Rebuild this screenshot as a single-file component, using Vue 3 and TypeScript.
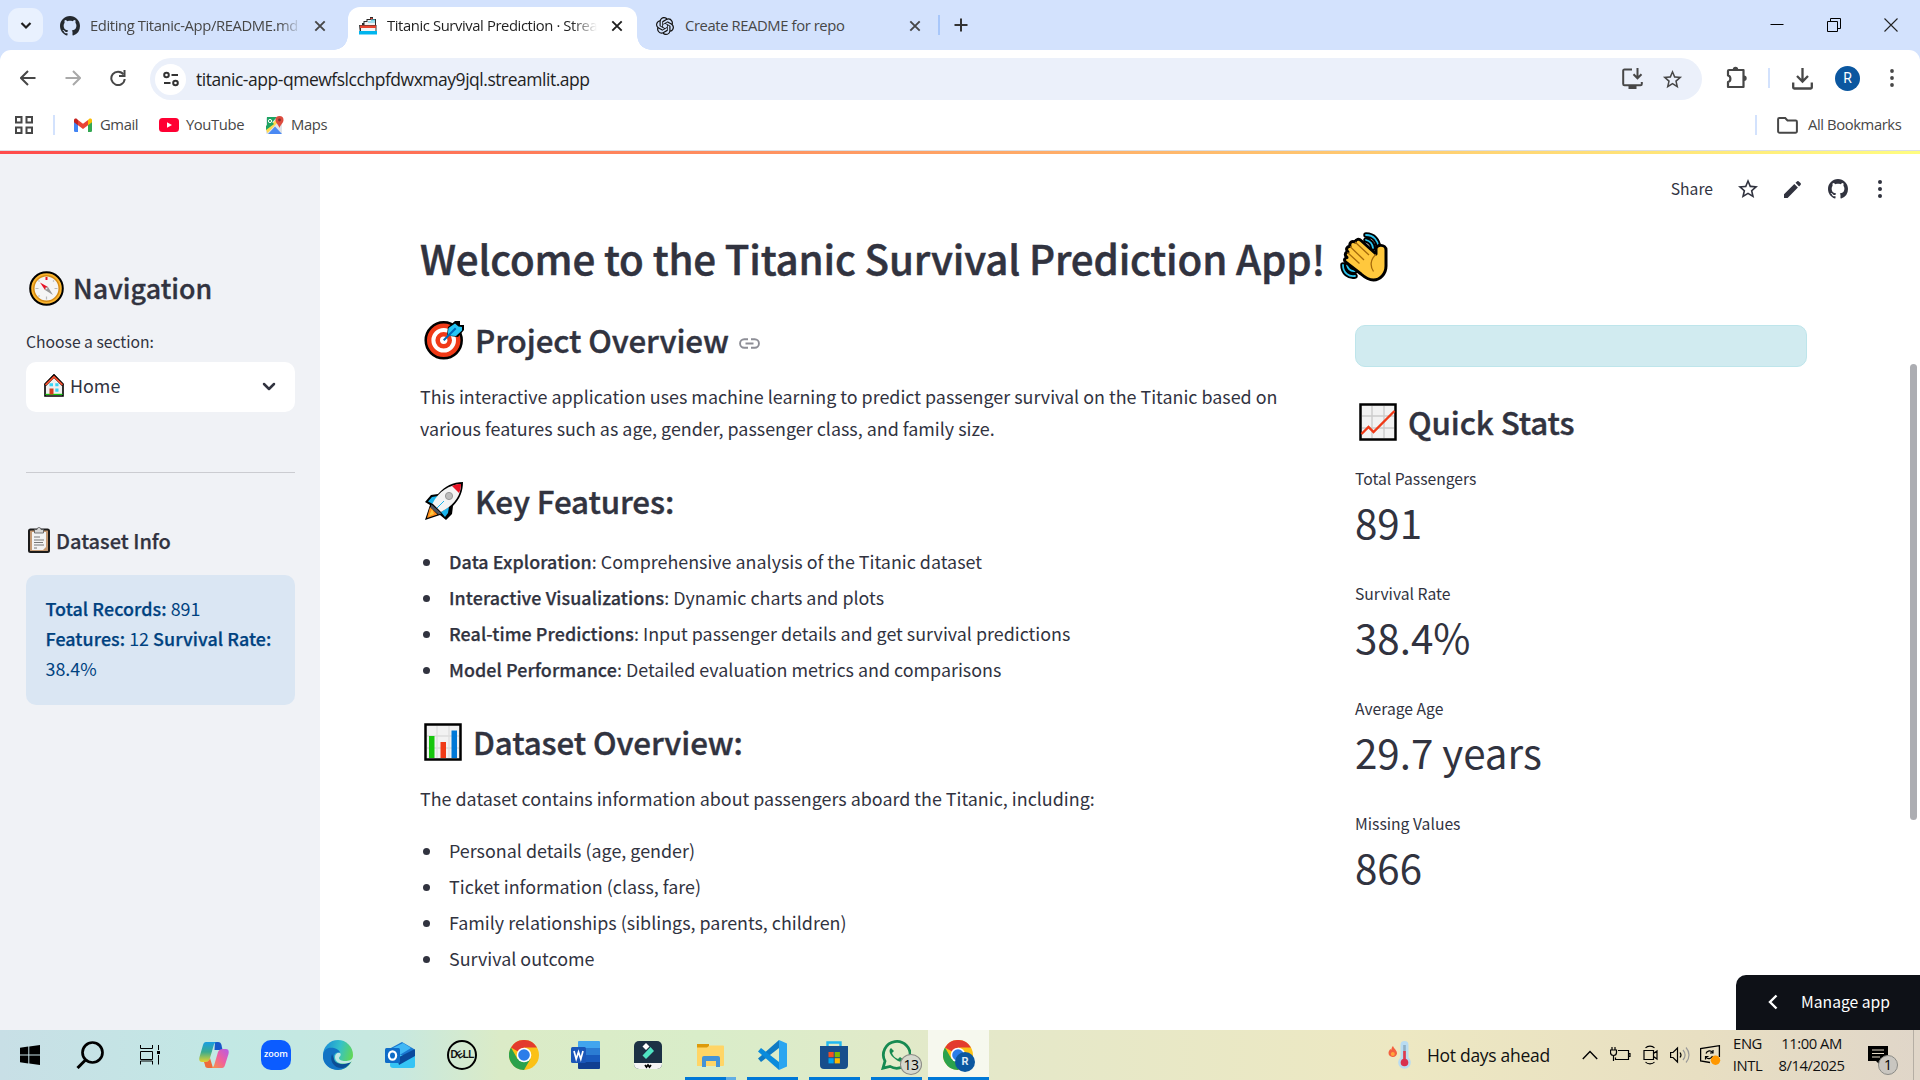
<script setup lang="ts">
interface Feature {
  name: string
  text: string
}

interface Metric {
  label: string
  value: string
}

const features: Feature[] = [
  { name: 'Data Exploration', text: 'Comprehensive analysis of the Titanic dataset' },
  { name: 'Interactive Visualizations', text: 'Dynamic charts and plots' },
  { name: 'Real-time Predictions', text: 'Input passenger details and get survival predictions' },
  { name: 'Model Performance', text: 'Detailed evaluation metrics and comparisons' },
]

const datasetItems: string[] = [
  'Personal details (age, gender)',
  'Ticket information (class, fare)',
  'Family relationships (siblings, parents, children)',
  'Survival outcome',
]

const metrics: Metric[] = [
  { label: 'Total Passengers', value: '891' },
  { label: 'Survival Rate', value: '38.4%' },
  { label: 'Average Age', value: '29.7 years' },
  { label: 'Missing Values', value: '866' },
]

const githubPath =
  'M8 0C3.58 0 0 3.58 0 8c0 3.54 2.29 6.53 5.47 7.59.4.07.55-.17.55-.38 0-.19-.01-.82-.01-1.49-2.01.37-2.53-.49-2.69-.94-.09-.23-.48-.94-.82-1.13-.28-.15-.68-.52-.01-.53.63-.01 1.08.58 1.23.82.72 1.21 1.87.87 2.33.66.07-.52.28-.87.51-1.07-1.78-.2-3.64-.89-3.64-3.95 0-.87.31-1.59.82-2.15-.08-.2-.36-1.02.08-2.12 0 0 .67-.21 2.2.82.64-.18 1.32-.27 2-.27s1.36.09 2 .27c1.53-1.04 2.2-.82 2.2-.82.44 1.1.16 1.92.08 2.12.51.56.82 1.27.82 2.15 0 3.07-1.87 3.75-3.65 3.95.29.25.54.73.54 1.48 0 1.07-.01 1.93-.01 2.2 0 .21.15.46.55.38A8.01 8.01 0 0 0 16 8c0-4.42-3.58-8-8-8z'
const starPath =
  'M22 9.24l-7.19-.62L12 2 9.19 8.63 2 9.24l5.46 4.73L5.82 21 12 17.27 18.18 21l-1.63-7.03L22 9.24zM12 15.4l-3.76 2.27 1-4.28-3.32-2.88 4.38-.38L12 6.1l1.71 4.04 4.38.38-3.32 2.88 1 4.28L12 15.4z'
</script>

<template>
  <div class="screen">
    <header class="tabstrip">
      <div class="tab-search">
        <svg width="14" height="14" viewBox="0 0 14 14"><path d="M2.5 5 7 9.5 11.500 5" fill="none" stroke="#1f1f1f" stroke-width="2.200" /></svg>
      </div>
      <div class="tab tab-first">
        <svg class="fav" width="20" height="20" viewBox="0 0 16 16"><path :d="githubPath" fill="#24292f" /></svg>
        <span class="tab-title t1">Editing Titanic-App/README.md</span>
        <svg class="x" width="12" height="12" viewBox="0 0 12 12"><path d="M1.300 1.300 10.700 10.700M10.700 1.300 1.300 10.700" stroke="#474747" stroke-width="1.900" /></svg>
      </div>
      <div class="tab tab-active">
        <svg class="fav" width="18" height="18" viewBox="0 0 18 18">
          <path d="M4.500 4h3V2H11V0h3v2h3v7H3V6h1.500z" fill="#2a2a2a" /><path d="M5.500 5h3V3H16v5.500H5.500z" fill="#f1f1f1" /><path d="M11.500 1h2v1.500h-2z" fill="#e8432e" /><path d="M9 5h7M12 3.200h4" stroke="#4acbe8" stroke-width="1.200" /><path d="M0 8h17.500v9H1z" fill="#333" /><path d="M1 8.500h16V11H1z" fill="#e8432e" /><path d="M2 11h14.500v3H2z" fill="#f4f4f4" /><path d="M0 14h18v3.500H0z" fill="#00b5ee" />
        </svg>
        <span class="tab-title t2">Titanic Survival Prediction · Streamlit</span>
        <svg class="x" width="12" height="12" viewBox="0 0 12 12"><path d="M1.300 1.300 10.700 10.700M10.700 1.300 1.300 10.700" stroke="#1f1f1f" stroke-width="1.900" /></svg>
      </div>
      <div class="tab tab-last">
        <svg class="fav" width="18" height="18" viewBox="0 0 24 24"><path fill="#111" d="M22.282 9.821a5.985 5.985 0 0 0-.516-4.910 6.046 6.046 0 0 0-6.510-2.900A6.065 6.065 0 0 0 4.981 4.180a5.985 5.985 0 0 0-3.998 2.900 6.046 6.046 0 0 0 .743 7.097 5.980 5.980 0 0 0 .510 4.911 6.051 6.051 0 0 0 6.515 2.900A5.985 5.985 0 0 0 13.260 24a6.056 6.056 0 0 0 5.772-4.206 5.990 5.990 0 0 0 3.998-2.900 6.056 6.056 0 0 0-.748-7.073zM13.260 22.430a4.476 4.476 0 0 1-2.877-1.040l.142-.081 4.779-2.758a.795.795 0 0 0 .393-.681v-6.737l2.020 1.169a.071.071 0 0 1 .038.052v5.583a4.504 4.504 0 0 1-4.495 4.493zM3.600 18.304a4.471 4.471 0 0 1-.535-3.014l.142.085 4.783 2.759a.771.771 0 0 0 .781 0l5.843-3.369v2.332a.080.080 0 0 1-.033.062L9.740 19.950a4.500 4.500 0 0 1-6.141-1.646zM2.341 7.896a4.485 4.485 0 0 1 2.366-1.973V11.600a.766.766 0 0 0 .388.677l5.815 3.354-2.020 1.169a.076.076 0 0 1-.071 0l-4.830-2.787A4.504 4.504 0 0 1 2.341 7.872zm16.597 3.855-5.833-3.387L15.119 7.200a.076.076 0 0 1 .071 0l4.830 2.791a4.494 4.494 0 0 1-.677 8.105v-5.678a.790.790 0 0 0-.405-.667zm2.010-3.023-.141-.085-4.774-2.782a.776.776 0 0 0-.785 0L9.409 9.230V6.897a.066.066 0 0 1 .028-.062l4.830-2.787a4.499 4.499 0 0 1 6.681 4.660zM8.307 12.863l-2.020-1.164a.080.080 0 0 1-.038-.057V6.075a4.499 4.499 0 0 1 7.376-3.454l-.142.081-4.779 2.758a.795.795 0 0 0-.393.681zm1.097-2.365 2.602-1.500 2.607 1.500v2.999l-2.597 1.500-2.607-1.500z" /></svg>
        <span class="tab-title t3">Create README for repo</span>
        <svg class="x" width="12" height="12" viewBox="0 0 12 12"><path d="M1.300 1.300 10.700 10.700M10.700 1.300 1.300 10.700" stroke="#474747" stroke-width="1.900" /></svg>
      </div>
      <i class="strip-sep"></i>
      <svg class="plus" width="14" height="14" viewBox="0 0 14 14"><path d="M7 .5v13M.5 7h13" stroke="#333" stroke-width="2" /></svg>
      <div class="window-controls">
        <svg width="14" height="14" viewBox="0 0 14 14"><path d="M.5 6.500h13" stroke="#000" /></svg>
        <svg width="14" height="14" viewBox="0 0 14 14"><path d="M.5 3.500h10v10H.5zM3.500 3.500v-3h10v10h-3" fill="none" stroke="#000" /></svg>
        <svg width="14" height="14" viewBox="0 0 14 14"><path d="M.5.500l13 13M13.500.500l-13 13" stroke="#222" stroke-width="1.100" /></svg>
      </div>
    </header>

    <div class="toolbar-back">
      <div class="toolbar">
        <svg class="nav-icon back" width="16" height="16" viewBox="0 0 16 16"><path d="M15.500 8H1.500M8 1 1 8l7 7" fill="none" stroke="#474747" stroke-width="2" /></svg>
        <svg class="nav-icon fwd" width="16" height="16" viewBox="0 0 16 16"><path d="M.5 8h14M8 1l7 7-7 7" fill="none" stroke="#a9a9a9" stroke-width="2" /></svg>
        <svg class="nav-icon reload" width="16" height="16" viewBox="0 0 16 16"><path d="M13.500 4.500A6.700 6.700 0 1 0 14.700 9" fill="none" stroke="#474747" stroke-width="2" /><path d="M15.500 0v7H9V5h4.500V0z" fill="#474747" /></svg>
        <div class="omnibox">
          <div class="site-info">
            <svg width="16" height="16" viewBox="0 0 16 16"><g fill="none" stroke="#333" stroke-width="2"><circle cx="3.500" cy="4" r="2.300" /><path d="M8.500 4H15M1 12h6.500" /><circle cx="12.500" cy="12" r="2.300" /></g></svg>
          </div>
          <span class="url">titanic-app-qmewfslcchpfdwxmay9jql.streamlit.app</span>
          <svg class="install" width="21" height="22" viewBox="0 0 21 22"><path d="M10 1.500H2.500A1.300 1.300 0 0 0 1.200 3v13a1.300 1.300 0 0 0 1.300 1.300h16A1.300 1.300 0 0 0 19.800 16v-2" fill="none" stroke="#474747" stroke-width="2" /><path d="M6.500 17.500h8V21h-8z" fill="#474747" /><path d="M15.500 0v10M11.500 6.300l4 4 4-4" fill="none" stroke="#474747" stroke-width="2" /></svg>
          <svg class="star" width="23" height="23" viewBox="0 0 24 24"><path :d="starPath" fill="#474747" /></svg>
        </div>
        <svg class="puzzle" width="22" height="25" viewBox="0 0 22 25"><path d="M3 5h14.500v7.500V22H2v-5c3.200-.5 3.200-6 0-6.500V6a1 1 0 0 1 1-1z" fill="none" stroke="#474747" stroke-width="2.200" stroke-linejoin="round" /><path d="M6.800 4.500a2.700 2.700 0 0 1 5.400 0zM18 10.500a2.700 2.700 0 0 1 0 5.400z" fill="#474747" /></svg>
        <i class="tool-sep"></i>
        <svg class="download" width="21" height="22" viewBox="0 0 21 22"><path d="M10.500 0v13M5 8l5.500 5.500L16 8M1.200 14.500v5a1 1 0 0 0 1 1h16.600a1 1 0 0 0 1-1v-5" fill="none" stroke="#474747" stroke-width="2.300" /></svg>
        <div class="avatar">R</div>
        <svg class="dots" width="4" height="18" viewBox="0 0 4 18"><g fill="#474747"><circle cx="2" cy="2" r="1.900" /><circle cx="2" cy="9" r="1.900" /><circle cx="2" cy="16" r="1.900" /></g></svg>
      </div>
      <div class="bookmarks">
        <svg class="apps" width="18" height="18" viewBox="0 0 18 18"><path d="M1 1h5.500v5.500H1zM11.500 1H17v5.500h-5.500zM1 11.500h5.500V17H1zM11.500 11.500H17V17h-5.500z" fill="none" stroke="#474747" stroke-width="2" /></svg>
        <i class="bm-sep"></i>
        <svg class="gmail" width="18" height="14" viewBox="0 0 18 14"><path d="M0 2v10.700A1.300 1.300 0 0 0 1.300 14H4V4.500z" fill="#4285f4" /><path d="M14 4.500V14h2.700a1.300 1.300 0 0 0 1.300-1.300V2z" fill="#34a853" /><path d="M4 2v5.300l5 3.700 5-3.700V2L9 5.700z" fill="#ea4335" /><path d="M0 2v2.200l4 3.100V2L3 1C1.500 0 0 1 0 2z" fill="#c5221f" /><path d="M18 2v2.200l-4 3.100V2l1-1c1.500-1 3 0 3 1z" fill="#fbbc04" /></svg>
        <span class="bm b1">Gmail</span>
        <svg class="youtube" width="20" height="14" viewBox="0 0 20 14"><rect width="20" height="14" rx="3.500" fill="#ff0033" /><path d="M8 4.200v5.600L13 7z" fill="#fff" /></svg>
        <span class="bm b2">YouTube</span>
        <svg class="maps" width="18" height="18" viewBox="0 0 18 18"><rect y="1" width="16" height="17" rx="1.500" fill="#dfe3e8" /><path d="M1 1h10L1 12z" fill="#1ea362" /><path d="M0 13.500 12 2l2 2L1.500 17z" fill="#ffd94c" /><path d="M0 14v-4l5-5 3 3z" fill="#1ea362" /><path d="M2 18 9 10.500l7 7.500z" fill="#4a89f3" /><path d="M13.500 0a4 4 0 0 0-4 4c0 3 3 4.500 4 8 1-3.500 4-5 4-8a4 4 0 0 0-4-4z" fill="#dd4b3e" /><circle cx="13.500" cy="4" r="1.400" fill="#822f2b" /><circle cx="4" cy="5" r="1.600" fill="none" stroke="#fff" /></svg>
        <span class="bm b3">Maps</span>
        <div class="all-bookmarks">
          <i class="bm-sep"></i>
          <svg width="21" height="17" viewBox="0 0 21 17"><path d="M2.300 1.100h5.900l2.300 2.400h8.200a1.200 1.200 0 0 1 1.200 1.200v9.500a1.500 1.500 0 0 1-1.500 1.500H2.600a1.500 1.500 0 0 1-1.500-1.500V2.300a1.200 1.200 0 0 1 1.200-1.200z" fill="none" stroke="#474747" stroke-width="2" /></svg>
          <span class="bm b4">All Bookmarks</span>
        </div>
      </div>
    </div>
    <div class="rainbow"></div>

    <div class="app">
      <aside class="sidebar">
        <h2 class="side-title">
          <svg width="35" height="35" viewBox="0 0 35 35"><circle cx="17.500" cy="17.500" r="16.300" fill="#fbb52f" stroke="#000" stroke-width="2" /><circle cx="17.500" cy="17.500" r="12.700" fill="#f5f5f5" stroke="#d58b14" stroke-width="1.500" /><g stroke="#bbb" stroke-width="1.200"><path d="M6.500 17.500h3M25.500 17.500h3M17.500 25.500v3M9.500 9.500l1 1M25 9.500l-1 1M9.500 25.500l1-1" /></g><path d="M16.500 6h2v3h-2z" fill="#e81224" /><path d="M11 11.500 19 16l-3 3z" fill="#e81224" /><path d="m24 24-8-5 3-3z" fill="#999" /><circle cx="17.500" cy="17.500" r="1.200" fill="#eee" stroke="#777" stroke-width=".5" /></svg>
          <span>Navigation</span>
        </h2>
        <label class="side-label">Choose a section:</label>
        <div class="select">
          <svg width="20" height="23" viewBox="0 0 20 23"><path d="M1 10.500 10 1.200l9 9.300V22H1z" fill="#f0f0f0" stroke="#000" stroke-width="1.600" /><path d="M1 11 10 2l9 9" fill="none" stroke="#000" stroke-width="3" /><path d="M1.500 10.800 10 2.800l8.500 8" fill="none" stroke="#f4502f" stroke-width="1.800" /><path d="M1.500 19.800h17V21h-17z" fill="#16c60c" /><path d="M5.500 14.500h4v6h-4z" fill="#d83b1c" /><path d="M5.500 9.300H9v3H5.500zM11.300 9.300h3.200v3h-3.200zM11.300 14.500h3.200v3.200h-3.200z" fill="#3ad4f5" /></svg>
          <span>Home</span>
          <svg class="chev" width="14" height="10" viewBox="0 0 14 10"><path d="m2 2 5 5 5-5" fill="none" stroke="#31333f" stroke-width="2.500" stroke-linecap="round" stroke-linejoin="round" /></svg>
        </div>
        <hr />
        <h3 class="side-sub">
          <svg width="22" height="26" viewBox="0 0 22 26"><rect x="1" y="2.500" width="20" height="22.500" rx="1.500" fill="#c49a74" stroke="#1b1b1b" stroke-width="2" /><path d="M4 5h14v15l-3 3H4z" fill="#f3f3f3" /><path d="M6.500 2.500H9a2 2 0 0 1 4 0h2.500V6h-9z" fill="#d8d8d8" stroke="#555" stroke-width=".8" /><path d="M6 10h6M6 13h10M6 15.500h9M6 18h10M6 21h3" stroke="#777" /></svg>
          <span>Dataset Info</span>
        </h3>
        <div class="info"><b>Total Records:</b> 891<br /><b>Features:</b> 12 <b>Survival Rate:</b><br />38.4%</div>
      </aside>

      <main class="content">
        <h1>
          <span>Welcome to the Titanic Survival Prediction App!</span>
          <svg width="50" height="52" viewBox="0 0 50 52">
            <g fill="none" stroke-linecap="round"><path d="M27 4c8 0 12 6 12.500 12M27 9c4 1 6.500 4 7 8M4 34c0 8 6 12 12 11M8 34c1 4 4 6.500 8 6" stroke="#000" stroke-width="5.500" /><path d="M27 4c8 0 12 6 12.500 12M27 9c4 1 6.500 4 7 8M4 34c0 8 6 12 12 11M8 34c1 4 4 6.500 8 6" stroke="#2cc5f0" stroke-width="1.800" /></g>
            <path d="M22 43 6.500 31c-2-2-.5-4.500 1.500-4.500-3-2.500-1.500-5.500 1-5.500-3-3-.5-6 2-5.500-1-4 2-6 5-4.500 1-3 4-3.500 6-1.500L37 23V18c0-5 10-5 10 1v16c0 8-6 14-12.500 14-5 0-8-2-12.500-6z" fill="#ffc83d" stroke="#000" stroke-width="3" stroke-linejoin="round" />
            <path d="m16 11 14 13M11 15.500l14 13.500M8.500 21.500l12 11M37 23.500c-6 5-6 12-2.500 17" fill="none" stroke="#a5690b" stroke-width="1.300" />
          </svg>
        </h1>
        <div class="columns">
          <section class="left">
            <h2 class="head h-overview">
              <svg width="40" height="40" viewBox="0 0 40 40"><circle cx="19.700" cy="20.300" r="18" fill="#f03a17" stroke="#000" stroke-width="2.500" /><circle cx="19.700" cy="20.300" r="10.300" fill="none" stroke="#fff" stroke-width="4" /><circle cx="19.700" cy="20.300" r="3.700" fill="#fff" /><path d="m23 15 1-8 7-6h5v4h4v5l-6 7-8-1z" fill="#000" /><path d="m23.500 15.500 1-7.500 6.500-4.500 3.500 3L38 7v3.500L32 16z" fill="#26c6f5" /><path d="m19.700 20.300 12-12" stroke="#0067b8" stroke-width="2" /></svg>
              <span>Project Overview</span>
              <svg class="link" width="21" height="11" viewBox="0 0 21 11"><path d="M9 1.200H5.300a4.200 4.200 0 0 0 0 8.500H9M12 1.200h3.700a4.200 4.200 0 0 1 0 8.500H12M6.500 5.500h8" fill="none" stroke="#8d8e96" stroke-width="1.900" /></svg>
            </h2>
            <p class="intro">This interactive application uses machine learning to predict passenger survival on the Titanic based on<br />various features such as age, gender, passenger class, and family size.</p>
            <h2 class="head h-features">
              <svg width="40" height="40" viewBox="0 0 40 40"><path d="M14 13 7 14l-6 7 5 3-5 15 15-5 6 5 6-6 1-8C36 18 39 10 39 1 29 1 21 5 14 13z" fill="#000" /><path d="m14 15-6 1-4 4.500 5 2.500zM25 26l-1 6-3 4-4-5z" fill="#1ab4ec" /><path d="M8.500 22.500C15 10 25 4 37 3c0 12-7 21-20 28z" fill="#f4f4f4" /><path d="M28 5c3-1.500 6-2 9-2 0 3-.5 6-2 9z" fill="#e81224" /><circle cx="25" cy="15" r="3.600" fill="#bdbdbd" stroke="#999" /><path d="m7.500 23.500 10 9-3 1-8-7z" fill="#4b5563" /><path d="m6 26 7.500 7.500L3 37z" fill="#ff8c1a" /><path d="m8 28 2 5-5 2z" fill="#ffc83d" /><path d="m13 27 7-7" stroke="#1ab4ec" /></svg>
              <span>Key Features:</span>
            </h2>
            <ul class="list-a">
              <li v-for="f in features" :key="f.name"><b>{{ f.name }}</b>: {{ f.text }}</li>
            </ul>
            <h2 class="head h-dataset">
              <svg width="38" height="38" viewBox="0 0 38 38"><path d="M1.500 1.500h35v35h-35z" fill="#f2f2f2" stroke="#000" stroke-width="2.500" /><path d="M13 3v32M25 3v32M3 13h32M3 25h32" stroke="#ddd" stroke-width="1.300" /><path d="M5 13h5.500v22H5z" fill="#16c60c" /><path d="M16.500 19H22v16h-5.500z" fill="#f03a17" /><path d="M27.500 7.500H33V35h-5.500z" fill="#0078d7" /></svg>
              <span>Dataset Overview:</span>
            </h2>
            <p class="about">The dataset contains information about passengers aboard the Titanic, including:</p>
            <ul class="list-b">
              <li v-for="item in datasetItems" :key="item">{{ item }}</li>
            </ul>
          </section>
          <section class="right">
            <div class="banner"></div>
            <h2 class="head h-stats">
              <svg width="38" height="38" viewBox="0 0 38 38"><path d="M1.500 1.500h35v35h-35z" fill="#f2f2f2" stroke="#000" stroke-width="2.500" /><path d="M13 3v32M25 3v32M3 13h32M3 25h32" stroke="#ccc" stroke-width="1.400" /><path d="m2.500 31 7-7 5 5L35.500 8" fill="none" stroke="#f03a17" stroke-width="2.400" /></svg>
              <span>Quick Stats</span>
            </h2>
            <div v-for="m in metrics" :key="m.label" class="metric">
              <div class="metric-label">{{ m.label }}</div>
              <div class="metric-value">{{ m.value }}</div>
            </div>
          </section>
        </div>
        <div class="actions">
          <span>Share</span>
          <svg class="a-star" width="24" height="24" viewBox="0 0 24 24"><path :d="starPath" fill="#31333f" /></svg>
          <svg class="a-pen" width="17" height="17" viewBox="0 0 17 17"><path d="M0 13.300 10.300 3l3.600 3.600L3.600 17H0zM11.500 1.800 13 .4a1.300 1.300 0 0 1 1.800 0l1.700 1.700a1.300 1.300 0 0 1 0 1.800L15.100 5.400z" fill="#31333f" /></svg>
          <svg class="a-git" width="20" height="20" viewBox="0 0 16 16"><path :d="githubPath" fill="#31333f" /></svg>
          <svg class="a-dots" width="4" height="18" viewBox="0 0 4 18"><g fill="#31333f"><circle cx="2" cy="2" r="2" /><circle cx="2" cy="9" r="2" /><circle cx="2" cy="16" r="2" /></g></svg>
        </div>
        <div class="scrollbar"></div>
        <div class="manage">
          <svg width="10" height="16" viewBox="0 0 10 16"><path d="M8.500 1.500 2 8l6.500 6.500" fill="none" stroke="#fff" stroke-width="2.400" /></svg>
          <span>Manage app</span>
        </div>
      </main>
    </div>

    <footer class="taskbar">
      <div class="apps-row">
        <div class="task w-start"><svg width="20" height="20" viewBox="0 0 20 20"><path d="M0 2.800 8.300 1.600v7.900H0zM9.300 1.400 20 0v9.500H9.300zM0 10.500h8.300v7.900L0 17.200zM9.300 10.500H20V20L9.300 18.600z" /></svg></div>
        <div class="task"><svg width="28" height="28" viewBox="0 0 28 28"><circle cx="16.500" cy="11.500" r="10" fill="none" stroke="#000" stroke-width="2.700" /><path d="m9.500 19-8 8" stroke="#000" stroke-width="3" /></svg></div>
        <div class="task w-view"><svg width="20" height="20" viewBox="0 0 20 20"><path d="M.5 0v3.500h12V0M.5 6.500h12v8H.5zM.5 19.500v-3.500h12v3.500M18.500 0v5M18.500 10v9.500" fill="none" stroke="#000" /><path d="M17 6h3v3h-3z" /></svg></div>
        <div class="task">
          <svg width="30" height="28" viewBox="0 0 30 28"><defs><linearGradient id="cpA" x1="0" y1="0" x2="0" y2="1"><stop offset="0" stop-color="#1b9de2" /><stop offset=".5" stop-color="#3bab8f" /><stop offset="1" stop-color="#e5d32c" /></linearGradient><linearGradient id="cpB" x1="1" y1="0" x2="0" y2="1"><stop offset="0" stop-color="#b45ce8" /><stop offset=".5" stop-color="#f0609d" /><stop offset="1" stop-color="#f79a3a" /></linearGradient></defs><path d="M16 1h3c2 0 3 1 3.500 3l1 5h-8z" fill="#1757c9" /><path d="M7 1h11c-2 0-3 2-3.500 4L11 17c-1 3-2 4-5 4H3c-3 0-3-3-2.500-5L4 4c.5-2 1.500-3 3-3z" fill="url(#cpA)" /><path d="M14 27H9c-2 0-3-1-3-3l-1-3c4 0 5-1 6-4z" fill="#ee6b3a" /><path d="M23 27H12c2 0 3-2 3.500-4L19 11c1-2 2-3 5-3h3c3 0 3 3 2.500 5L26 24c-.5 2-1.500 3-3 3z" fill="url(#cpB)" /></svg>
        </div>
        <div class="task"><div class="zoom-app">zoom</div></div>
        <div class="task">
          <svg width="30" height="30" viewBox="0 0 30 30"><defs><linearGradient id="edA" x1="0" y1=".3" x2="1" y2=".6"><stop offset="0" stop-color="#1b8fd8" /><stop offset=".5" stop-color="#35c1c9" /><stop offset="1" stop-color="#66d94c" /></linearGradient></defs><circle cx="15" cy="15" r="15" fill="url(#edA)" /><path d="M0 15C1 8 7 7 11 8c4 1 6 3 6 5-4-2-7 2-6 6 1 5 8 7 17 3-3 5-8 8-13 8C6 30-1 23 0 15z" fill="#1273c4" /><path d="M9 14c-3 8 3 15 11 14 4-1 6-4 8-6-8 4-16 2-17-3z" fill="#0c4f96" /><path d="M12 17c0-3 3-5 5-4 2 2-1 4-1 5 0 2 3 3 6 3 4 0 7-1 8-4v3l-2 2c-7 3-16 2-16-5z" fill="#c3e8e3" /></svg>
        </div>
        <div class="task">
          <svg width="30" height="28" viewBox="0 0 30 28"><path d="m4 8 13-7 12 7v7H4z" fill="#1a78d0" /><path d="M8 7 18 2l8 5-13 8z" fill="#41b8f5" /><path d="M6 14h24v11a2 2 0 0 1-2 2H8a3 3 0 0 1-3-3z" fill="#35c4f5" /><path d="m12 17 18-9v7L14 24z" fill="#0a4a9c" /><rect y="7" width="15" height="15" rx="1.500" fill="#0f6cc8" /><ellipse cx="7.500" cy="14.500" rx="3.600" ry="4.200" fill="none" stroke="#fff" stroke-width="2.200" /></svg>
        </div>
        <div class="task"><div class="dell">D<i>E</i>LL</div></div>
        <div class="task">
          <svg width="30" height="30" viewBox="0 0 30 30"><circle cx="15" cy="15" r="15" fill="#fbc116" /><path d="M15 15 2 7.500A15 15 0 0 1 28 7.500H15z" fill="#e33b2e" /><path d="M2 7.500A15 15 0 0 0 15 30l6.500-11.300L8.500 19z" fill="#2ba24c" /><circle cx="15" cy="15" r="7.300" fill="#fff" /><circle cx="15" cy="15" r="5.800" fill="#2b7de9" /></svg>
        </div>
        <div class="task">
          <svg width="30" height="28" viewBox="0 0 30 28"><path d="M8 0h20a1 1 0 0 1 1 1v6H7V1a1 1 0 0 1 1-1z" fill="#41a5ee" /><path d="M7 7h22v7H7z" fill="#2b7cd3" /><path d="M7 14h22v7H7z" fill="#185abd" /><path d="M7 21h22v6a1 1 0 0 1-1 1H8a1 1 0 0 1-1-1z" fill="#103f91" /><rect y="6" width="15" height="16" rx="1.500" fill="#1a56b8" /><path d="m3 10 2.200 8L7.500 11l2.300 7L12 10" fill="none" stroke="#fff" stroke-width="1.700" /></svg>
        </div>
        <div class="task">
          <svg width="28" height="28" viewBox="0 0 28 28"><rect width="28" height="28" rx="5" fill="#1c3145" /><path d="M0 22h28v1a5 5 0 0 1-5 5H5a5 5 0 0 1-5-5z" fill="#f4f4f4" /><path d="m12 2 3.500 3.500L12 9 8.500 5.500z" fill="#fff" /><path d="m16.500 6 3.500 4-8 8-3.500-3.500z" fill="#50e3c2" /><path d="m11 24 1.500 2 1.500-2 1.500 2 1.500-2" stroke="#000" stroke-width="1.700" fill="none" /></svg>
        </div>
        <div class="task run split">
          <svg width="28" height="26" viewBox="0 0 28 26"><path d="M1 2h12v4H1z" fill="#dd9a0b" /><path d="M1 5.500h10l2.500-2H27a1 1 0 0 1 1 1V23a1 1 0 0 1-1 1H1z" fill="#ffd566" /><path d="M6 25V16a2 2 0 0 1 2-2h14a2 2 0 0 1 2 2v9h-4v-6H10v6z" fill="#4593d6" /></svg>
        </div>
        <div class="task run">
          <svg width="30" height="30" viewBox="0 0 30 30"><path d="m22 0 8 3.500v23L22 30z" fill="#2ba5f0" /><path d="M22 0 1 18.500 4 22 22 8z" fill="#0f7ac4" /><path d="M22 30 1 11.500 4 8l18 14z" fill="#0a8bdc" /></svg>
        </div>
        <div class="task run">
          <svg width="30" height="30" viewBox="0 0 30 30"><path d="M8.500 8V2.500h13V8" fill="none" stroke="#20b8f0" stroke-width="2.400" /><path d="M1 6h28v19a4 4 0 0 1-4 4H5a4 4 0 0 1-4-4z" fill="#174e8c" /><path d="M9.500 12h5.200v5.200H9.500z" fill="#f25022" /><path d="M15.700 12h5.200v5.200h-5.200z" fill="#7fba00" /><path d="M9.500 18.200h5.200v5.200H9.500z" fill="#00a4ef" /><path d="M15.700 18.200h5.200v5.200h-5.200z" fill="#ffb900" /></svg>
        </div>
        <div class="task run">
          <svg width="30" height="30" viewBox="0 0 30 30"><path d="M2 28.200 4 21.200A13.400 13.400 0 1 1 9 26.400z" fill="#e3eccb" stroke="#168a52" stroke-width="2.800" /><path d="M10 8c-3 2-1 7 3 10 4 4 8 5 10 2l-4-3-2 2c-3-1-5-3-6-6l2-2z" fill="#168a52" /></svg>
          <em class="badge b13">13</em>
        </div>
        <div class="task run active">
          <svg width="30" height="30" viewBox="0 0 30 30"><circle cx="15" cy="15" r="15" fill="#fbc116" /><path d="M15 15 2 7.500A15 15 0 0 1 28 7.500H15z" fill="#e33b2e" /><path d="M2 7.500A15 15 0 0 0 15 30l6.500-11.300L8.500 19z" fill="#2ba24c" /><circle cx="15" cy="15" r="7.300" fill="#fff" /><circle cx="15" cy="15" r="5.800" fill="#2b7de9" /></svg>
          <em class="badge bR">R</em>
        </div>
      </div>
      <div class="tray">
        <svg width="24" height="30" viewBox="0 0 24 30"><path d="M12.500 5a4 4 0 0 1 8 0v12.500a6.300 6.300 0 1 1-8 0z" fill="#b9dcf2" /><path d="M15.200 5h2.600v15h-2.600z" fill="#8fb0c5" /><path d="M15.200 11h2.600v12h-2.600z" fill="#e23a4e" /><circle cx="16.500" cy="22.500" r="3.800" fill="#d9304e" /><path d="M5 6c1 3 4 4 4 7.500A4.300 4.300 0 0 1 .5 13c0-2 1-3 2-4l.7 1C3.500 8.500 4 7 5 6z" fill="#f4603f" /><circle cx="4.800" cy="14" r="2" fill="#ffa53c" /></svg>
        <span class="weather">Hot days ahead</span>
        <svg class="up" width="16" height="10" viewBox="0 0 16 10"><path d="m.8 9 7.200-7.500L15.200 9" fill="none" stroke="#000" stroke-width="1.400" /></svg>
        <svg class="bat" width="21" height="16" viewBox="0 0 21 16"><path d="M8 3.500h10.500v9H5.500v-2M18.500 6.500h1.500v3h-1.500M2 0v2.500M5 0v2.500M.5 3h6v2.500a3 3 0 0 1-6 0zM3.500 8.500v5.500" fill="none" stroke="#000" stroke-width="1.200" /></svg>
        <svg class="cam" width="16" height="20" viewBox="0 0 16 20"><path d="M1 5.500h9.500v9H1zM10.500 8.500 14 6v8l-3.500-2.500M2.500 3c2-2.500 7-2.500 9 0M2.500 17c2 2.500 7 2.500 9 0" fill="none" stroke="#000" stroke-width="1.200" /></svg>
        <svg class="vol" width="21" height="18" viewBox="0 0 21 18"><path d="M.6 6.500H3L7.500 2v14L3 11.500H.6zM10 6.500c1.200 1.500 1.200 3.500 0 5" fill="none" stroke="#000" stroke-width="1.200" /><path d="M13 4c2.500 3 2.500 7 0 10M16 1.500c4 4.500 4 10.500 0 15" fill="none" stroke="#999" stroke-width="1.200" /></svg>
        <svg class="sync" width="21" height="20" viewBox="0 0 21 20"><path d="M10 17.500.6 16V3.500L19.400.7V12" fill="none" stroke="#000" stroke-width="1.300" /><path d="M6 8.500c1-3 5-3.500 6.500-1M13 5v3h-3M12.500 11c-1 3-5 3.500-6.500 1M5.500 14.500V11.500h3" fill="none" stroke="#000" stroke-width="1.200" /><circle cx="15.500" cy="15.300" r="4.700" fill="#ff9800" /></svg>
        <div class="two lang"><span>ENG</span><span>INTL</span></div>
        <div class="two clock"><span class="time">11:00 AM</span><span>8/14/2025</span></div>
        <div class="notif">
          <svg width="20" height="19" viewBox="0 0 20 19"><path d="M0 0h20v15h-8v4l-4-4H0z" /><path d="M4 4h12M4 7.500h12M4 11h8" stroke="#e4dac7" stroke-width="1.200" /></svg>
          <em class="badge b1n">1</em>
        </div>
        <i class="peek"></i>
      </div>
    </footer>
  </div>
</template>

<style>
body {
  margin: 0;
  overflow: hidden;
}
</style>

<style scoped>
.screen {
  width: 1920px;
  height: 1080px;
  display: flex;
  flex-direction: column;
  background: #fff;
  color: #31333f;
  font-family: "Noto Sans CJK SC", "Source Sans Pro", sans-serif;
  font-size: 17.9px;
  overflow: hidden;
}
.screen svg { display: block; flex: none; }
.screen span { white-space: nowrap; }
h1, h2, h3, p, ul { margin: 0; padding: 0; }
b { font-weight: 500; letter-spacing: .07px; -webkit-text-stroke: .25px currentColor; }
i { display: block; }

.tabstrip {
  height: 50px;
  background: #d3e2fd;
  display: flex;
  align-items: center;
  font-family: "Open Sans", sans-serif;
  font-size: 14.8px;
}
.tab-search {
  width: 35px;
  height: 34px;
  margin-left: 8px;
  border-radius: 11px;
  background: #e9f1fe;
  display: flex;
  align-items: center;
  justify-content: center;
}
.tab { display: flex; align-items: center; height: 43px; margin-top: 7px; box-sizing: border-box; padding-bottom: 6px; }
.fav { margin-right: 10px; }
.tab-title { color: #474747; height: 24px; line-height: 24px; margin-top: -1px; overflow: hidden; letter-spacing: -.4px; }
.tab-first { width: 305px; padding-left: 17px; }
.t1 { width: 211px; -webkit-mask-image: linear-gradient(90deg, #000 90%, transparent); mask-image: linear-gradient(90deg, #000 90%, transparent); }
.tab-first .x { margin-left: 13px; }
.tab-active { position: relative; width: 289px; padding-left: 11px; background: #fff; border-radius: 12px 12px 0 0; }
.tab-active::before, .tab-active::after { content: ""; position: absolute; bottom: 0; width: 14px; height: 14px; }
.tab-active::before { left: -14px; background: radial-gradient(circle at 0 0, transparent 13.5px, #fff 14px); }
.tab-active::after { right: -14px; background: radial-gradient(circle at 100% 0, transparent 13.5px, #fff 14px); }
.tab-active .tab-title { color: #1f1f1f; }
.t2 { width: 210px; -webkit-mask-image: linear-gradient(90deg, #000 88%, transparent); mask-image: linear-gradient(90deg, #000 88%, transparent); }
.tab-active .x { margin-left: 14px; }
.tab-last { width: 301px; padding-left: 19px; }
.t3 { width: 224px; margin-left: 1px; }
.strip-sep { width: 2px; height: 20px; background: #a8c7fa; }
.plus { margin-left: 14px; }
.window-controls { margin-left: auto; margin-right: 22px; display: flex; gap: 43px; }

.toolbar-back { background: #d3e2fd; height: 100px; flex: none; }
.toolbar { height: 56px; background: #fff; border-radius: 11px 11px 0 0; display: flex; align-items: center; }
.back { margin-left: 20px; }
.fwd { margin-left: 29px; }
.reload { margin-left: 29px; }
.omnibox { width: 1552px; height: 42px; margin-left: 24px; margin-top: 2px; border-radius: 21px; background: #ebf0fa; display: flex; align-items: center; }
.site-info { width: 31px; height: 31px; margin-left: 5px; border-radius: 50%; background: #fff; display: flex; align-items: center; justify-content: center; }
.url { margin-left: 10px; width: 1426px; color: #1f1f1f; font: 17.5px/30px "Open Sans", sans-serif; letter-spacing: -.47px; }
.star { margin-left: 18px; }
.puzzle { margin-left: 24px; margin-top: -1px; }
.tool-sep { width: 2px; height: 20px; margin-left: 20px; background: #d3e2fd; }
.download { margin-left: 22px; margin-top: 2px; }
.avatar { width: 25px; height: 25px; margin-left: 22px; border-radius: 50%; background: #0b57a0; color: #fff; font: 14px/25px Roboto, sans-serif; text-align: center; }
.dots { margin-left: 30px; }
.bookmarks { height: 44px; background: #fff; display: flex; align-items: center; box-sizing: border-box; padding-bottom: 6px; }
.apps { margin-left: 15px; }
.bm-sep { width: 2px; height: 20px; background: #d3e2fd; }
.apps + .bm-sep { margin-left: 20px; }
.gmail { margin-left: 19px; }
.bm { color: #474747; font: 14.800px/20px "Open Sans", sans-serif; letter-spacing: -.4px; margin-top: -2px; }
.b1 { margin-left: 8px; width: 59px; }
.b2 { margin-left: 7px; width: 80px; }
.b3 { margin-left: 7px; }
.all-bookmarks { margin-left: auto; display: flex; align-items: center; width: 165px; }
.all-bookmarks svg { margin-left: 20px; }
.b4 { margin-left: 10px; }
.rainbow { height: 4px; flex: none; box-sizing: border-box; border-top: 1px solid #dcdfe4; background: linear-gradient(90deg, #ff4b4b, #fffd80); }

.app { height: 876px; display: flex; }
.sidebar { width: 320px; box-sizing: border-box; padding: 0 25px 0 26px; background: #f0f2f6; }
.side-title { display: flex; align-items: center; height: 44px; margin: 112px 0 0; padding-left: 3px; font-size: 26.800px; line-height: 44px; font-weight: 500; letter-spacing: .05px; -webkit-text-stroke: .35px currentColor; }
.side-title span { margin-left: 9px; }
.side-label { display: block; margin-top: 19px; height: 26px; line-height: 26px; font-size: 15.700px; }
.select { height: 50px; margin-top: 7px; border-radius: 10px; background: #fff; display: flex; align-items: center; padding: 0 19px 3px 18px; box-sizing: border-box; }
.select span { margin-left: 6px; margin-top: -1px; }
.select .chev { margin-left: auto; margin-top: 3px; }
hr { margin: 60px 0 0; border: 0; height: 1px; background: #cbccd1; }
.side-sub { display: flex; align-items: center; height: 36px; margin-top: 49px; padding-left: 2px; font-size: 20px; font-weight: 500; -webkit-text-stroke: .25px currentColor; }
.side-sub span { margin-left: 6px; }
.info { margin-top: 17px; height: 130px; box-sizing: border-box; padding: 18px 19.5px; border-radius: 10px; background: #dae6f3; color: #004280; line-height: 30px; white-space: nowrap; }

.content { flex: 1; position: relative; padding-left: 100px; }
h1 { display: flex; align-items: center; height: 60px; margin-top: 73px; font-size: 40.300px; line-height: 59px; font-weight: 500; letter-spacing: -.16px; -webkit-text-stroke: .5px currentColor; }
h1 span { width: 905px; }
h1 svg { margin-left: 14px; }
.columns { display: flex; }
.left { width: 934px; }
.head { display: flex; align-items: center; height: 44px; font-size: 31.300px; line-height: 44px; font-weight: 500; letter-spacing: -.1px; -webkit-text-stroke: .4px currentColor; padding-left: 4px; }
.head span { margin-left: 11px; }
.h-overview { margin-top: 31px; }
.link { margin-left: 10px; margin-top: 6px; }
.left p { line-height: 32px; white-space: nowrap; }
.intro { margin-top: 18px; }
.h-features { margin-top: 35px; }
ul { list-style: none; }
li { position: relative; height: 32px; margin-bottom: 4px; padding-left: 29px; line-height: 32px; white-space: nowrap; }
li::before { content: ""; position: absolute; left: 3px; top: 14px; width: 7px; height: 7px; border-radius: 50%; background: #31333f; }
.list-a { margin-top: 22px; }
.h-dataset { margin-top: 35px; }
.about { margin-top: 18px; }
.list-b { margin-top: 20px; }
.right { width: 452px; margin-left: 1px; }
.banner { height: 42px; margin-top: 38px; box-sizing: border-box; border: 1px solid #bee5eb; border-radius: 10px; background: #d1ebf0; }
.h-stats { margin-top: 33px; margin-bottom: 22px; }
.metric { height: 115px; }
.metric-label { height: 26px; line-height: 26px; font-size: 15.700px; }
.metric-value { height: 56px; margin-top: 2px; line-height: 56px; font-size: 40.300px; }
.actions { position: absolute; top: 18px; right: 38px; height: 34px; display: flex; align-items: center; }
.actions span { font-size: 15.700px; line-height: 34px; }
.a-star { margin-left: 23px; }
.a-pen { margin-left: 24px; }
.a-git { margin-left: 27px; }
.a-dots { margin-left: 30px; }
.scrollbar { position: absolute; right: 3px; top: 210px; width: 7px; height: 456px; border-radius: 4px; background: #acadb2; }
.manage { position: absolute; right: 0; bottom: 0; width: 184px; height: 55px; box-sizing: border-box; padding-left: 32px; padding-bottom: 2px; border-radius: 10px 0 0 0; background: #0e1117; color: #fff; display: flex; align-items: center; }
.manage span { margin-left: 23px; font-size: 15.7px; }

.taskbar { height: 50px; display: flex; color: #111; background: linear-gradient(90deg, #c8dfe6 0, #c2e8e4 230px, #c7e8df 400px, #dbebc7 500px, #d9edc9 700px, #e5e8c9 1000px, #ede8c2 1400px, #e8dfc2 1700px, #e0d6c9 1920px); font-family: "Open Sans", sans-serif; }
.apps-row { display: flex; margin-left: -3px; }
.task { position: relative; width: 62px; height: 50px; display: flex; align-items: center; justify-content: center; }
.w-start { width: 66px; }
.task:nth-child(2) { width: 54px; margin-right: 4px; }
.w-view svg { margin-right: 4px; }
.run::after { content: ""; position: absolute; left: 6px; right: 5px; bottom: 0; height: 3px; background: #0078d7; }
.split::after { background: linear-gradient(90deg, #0078d7 41px, #62aee4 41px); }
.task.active { width: 61px; margin-left: 1px; background: rgba(255, 255, 255, .68); }
.active::after { left: 0; right: 0; }
.active svg { margin-right: 2px; }
.zoom-app { width: 30px; height: 30px; border-radius: 10px; background: #0b5cff; color: #fff; font: 600 9px/28px "Open Sans", sans-serif; text-align: center; }
.dell { width: 26px; height: 26px; border: 2px solid #000; border-radius: 50%; display: flex; justify-content: center; font: bold 10px/26px "Liberation Sans", sans-serif; letter-spacing: -.8px; }
.dell i { transform: rotate(-35deg); font-style: normal; }
.badge { position: absolute; box-sizing: border-box; border-radius: 50%; font-style: normal; text-align: center; }
.b13 { left: 35px; top: 24px; width: 22px; height: 21px; border: 1px solid #8b8b86; background: #d5d8cd; color: #000; font-size: 14px; line-height: 19px; letter-spacing: -.5px; }
.bR { left: 27px; top: 22px; width: 20px; height: 20px; background: #0b57a0; color: #dce8f5; font: bold 11px/20px Roboto, sans-serif; }
.tray { margin-left: auto; width: 532px; display: flex; align-items: center; }
.weather { margin-left: 15px; width: 155px; font-size: 17.5px; line-height: 24px; letter-spacing: -.3px; }
.bat { margin-left: 12px; }
.cam { margin-left: 12px; }
.vol { margin-left: 11px; }
.sync { margin-left: 9px; }
.two { display: flex; flex-direction: column; align-items: center; font-size: 14.8px; line-height: 22px; letter-spacing: -.45px; margin-top: -2px; }
.lang { margin-left: 12px; width: 29px; }
.clock { margin-left: 15px; width: 69px; }
.notif { position: relative; margin-left: 22px; }
.b1n { left: 10px; top: 9px; width: 20px; height: 20px; border: 1px solid #8b8b86; background: #c9c6c0; color: #000; font-size: 14px; line-height: 18px; }
.peek { width: 1px; height: 50px; margin-left: 25px; background: #b5aea4; }
</style>
